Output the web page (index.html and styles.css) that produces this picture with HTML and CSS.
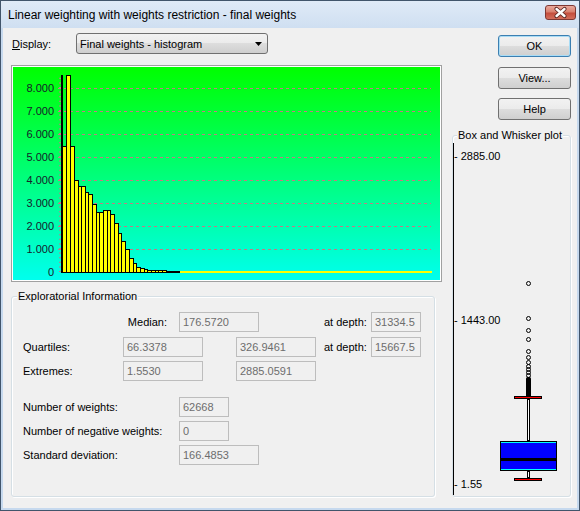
FILE: index.html
```html
<!DOCTYPE html>
<html>
<head>
<meta charset="utf-8">
<title>Linear weighting with weights restriction - final weights</title>
<link rel="stylesheet" href="styles.css">
</head>
<body>
<div class="window">
  <div class="titlebar">
    <span class="title">Linear weighting with weights restriction - final weights</span>
    <button class="close" aria-label="Close">
      <svg width="29" height="13" viewBox="0 0 29 13">
        <path d="M10.5 3 L18.5 10 M18.5 3 L10.5 10" stroke="#5a2622" stroke-width="4.2" stroke-linecap="round"/>
        <path d="M10.5 3 L18.5 10 M18.5 3 L10.5 10" stroke="#ffffff" stroke-width="2.4" stroke-linecap="round"/>
      </svg>
    </button>
  </div>
  <div class="client">
    <div class="left">
      <div class="display-row">
        <span class="display-label"><u>D</u>isplay:</span>
        <div class="combo">
          <span class="combo-text">Final weights - histogram</span>
          <svg class="combo-arrow" width="7" height="4" viewBox="0 0 7 4"><path d="M0 0 H7 L3.5 4 Z" fill="#000"/></svg>
        </div>
      </div>
      <div class="chart">
        <svg width="427" height="213" viewBox="13 67 427 213">
          <defs>
            <linearGradient id="bg" x1="0" y1="0" x2="0" y2="1">
              <stop offset="0" stop-color="#00ff00"/>
              <stop offset="1" stop-color="#00ffee"/>
            </linearGradient>
          </defs>
          <rect x="13" y="67" width="427" height="213" fill="url(#bg)"/>
          <g stroke="#c47a84" stroke-width="1" stroke-dasharray="3 3">
            <line x1="58" y1="88.5" x2="431" y2="88.5"/>
            <line x1="58" y1="111.5" x2="431" y2="111.5"/>
            <line x1="58" y1="134.5" x2="431" y2="134.5"/>
            <line x1="58" y1="157.5" x2="431" y2="157.5"/>
            <line x1="58" y1="180.5" x2="431" y2="180.5"/>
            <line x1="58" y1="203.5" x2="431" y2="203.5"/>
            <line x1="58" y1="226.5" x2="431" y2="226.5"/>
            <line x1="58" y1="249.5" x2="431" y2="249.5"/>
          </g>
          <g class="ylab" text-anchor="end">
            <text x="54" y="92">8.000</text>
            <text x="54" y="115">7.000</text>
            <text x="54" y="138">6.000</text>
            <text x="54" y="161">5.000</text>
            <text x="54" y="184">4.000</text>
            <text x="54" y="207">3.000</text>
            <text x="54" y="230">2.000</text>
            <text x="54" y="253">1.000</text>
            <text x="54" y="276">0</text>
          </g>
          <line x1="60" y1="272" x2="60" y2="75" stroke="#c47a84" stroke-width="2" stroke-dasharray="1 3.6"/>
          <rect x="61" y="75" width="2" height="198" fill="#000"/>
          <rect x="61" y="271" width="119" height="2" fill="#000"/>
          <rect x="180" y="271" width="252" height="2" fill="#ffff00"/>
          <g fill="#ffff00" stroke="#000" stroke-width="1">
            <rect x="62.5" y="146.5" width="4" height="126"/>
            <rect x="66.5" y="75.5" width="4" height="197"/>
            <rect x="70.5" y="146.5" width="4" height="126"/>
            <rect x="74.5" y="180.5" width="4" height="92"/>
            <rect x="78.5" y="186.5" width="3" height="86"/>
            <rect x="81.5" y="186.5" width="4" height="86"/>
            <rect x="85.5" y="192.5" width="3" height="80"/>
            <rect x="88.5" y="194.5" width="4" height="78"/>
            <rect x="92.5" y="204.5" width="4" height="68"/>
            <rect x="96.5" y="212.5" width="3" height="60"/>
            <rect x="99.5" y="212.5" width="4" height="60"/>
            <rect x="103.5" y="210.5" width="4" height="62"/>
            <rect x="107.5" y="210.5" width="3" height="62"/>
            <rect x="110.5" y="214.5" width="4" height="58"/>
            <rect x="114.5" y="223.5" width="4" height="49"/>
            <rect x="118.5" y="233.5" width="3" height="39"/>
            <rect x="121.5" y="241.5" width="4" height="31"/>
            <rect x="125.5" y="249.5" width="4" height="23"/>
            <rect x="129.5" y="258.5" width="4" height="14"/>
            <rect x="133.5" y="263.5" width="3" height="9"/>
            <rect x="136.5" y="267.5" width="4" height="5"/>
            <rect x="140.5" y="268.5" width="4" height="4"/>
            <rect x="144.5" y="269.5" width="3" height="3"/>
            <rect x="147.5" y="270.5" width="4" height="2"/>
            <rect x="151.5" y="270.5" width="4" height="2"/>
            <rect x="155.5" y="270.5" width="3" height="2"/>
            <rect x="158.5" y="270.5" width="4" height="2"/>
            <rect x="162.5" y="270.5" width="4" height="2"/>
          </g>
        </svg>
      </div>
      <div class="group info">
        <span class="legend">Exploratorial Information</span>
        <div class="info-grid">
          <span class="lab median-lab">Median:</span>
          <span class="field f-median">176.5720</span>
          <span class="lab depth-lab r1">at depth:</span>
          <span class="field f-depth r1">31334.5</span>

          <span class="lab first r3">Quartiles:</span>
          <span class="field fa r3">66.3378</span>
          <span class="field fb r3">326.9461</span>
          <span class="lab depth-lab r3">at depth:</span>
          <span class="field f-depth r3">15667.5</span>

          <span class="lab first r5">Extremes:</span>
          <span class="field fa r5">1.5530</span>
          <span class="field fb r5">2885.0591</span>

          <span class="lab wide r7">Number of weights:</span>
          <span class="field short r7">62668</span>

          <span class="lab wide r9">Number of negative weights:</span>
          <span class="field short r9">0</span>

          <span class="lab wide r11">Standard deviation:</span>
          <span class="field long r11">166.4853</span>
        </div>
      </div>
    </div>
    <div class="right">
      <button class="btn default b-ok">OK</button>
      <button class="btn b-view">View...</button>
      <button class="btn b-help">Help</button>
      <div class="group boxplot">
        <span class="legend">Box and Whisker plot</span>
        <svg width="117" height="360" viewBox="453 136 117 360">
          <rect x="453" y="143" width="1" height="352" fill="#000"/>
          <g class="blab">
            <text x="454" y="160">- 2885.00</text>
            <text x="454" y="324">- 1443.00</text>
            <text x="454" y="488">- 1.55</text>
          </g>
          <g fill="none" stroke="#000" stroke-width="1">
            <circle cx="528.5" cy="283.5" r="2"/>
            <circle cx="528.5" cy="318.5" r="2"/>
            <circle cx="528.5" cy="330.5" r="2"/>
            <circle cx="528.5" cy="339.5" r="2"/>
            <circle cx="528.5" cy="351.5" r="2"/>
            <circle cx="528.5" cy="357.5" r="2"/>
            <circle cx="528.5" cy="362.5" r="2"/>
            <circle cx="528.5" cy="366.5" r="2"/>
            <circle cx="528.5" cy="369.5" r="2"/>
            <circle cx="528.5" cy="372.5" r="2"/>
            <circle cx="528.5" cy="375.5" r="2"/>
          </g>
          <rect x="526" y="377" width="5" height="21" rx="1.5" fill="#000"/>
          <rect x="527.5" y="399" width="2" height="42" fill="#fff" stroke="#000"/>
          <rect x="514.5" y="396.5" width="27" height="2" fill="#ff0000" stroke="#000"/>
          <rect x="500.5" y="441.5" width="56" height="29" fill="#0000ff" stroke="#000"/>
          <rect x="501" y="442" width="55" height="1" fill="#00ffff"/>
          <rect x="501" y="469" width="55" height="1" fill="#00ffff"/>
          <rect x="501" y="458" width="55" height="3" fill="#000"/>
          <rect x="527.5" y="471" width="2" height="7" fill="#fff" stroke="#000"/>
          <rect x="514.5" y="478.5" width="27" height="2" fill="#ff0000" stroke="#000"/>
        </svg>
      </div>
    </div>
  </div>
</div>
</body>
</html>
```

FILE: styles.css
```css
* {
  box-sizing: border-box;
}

html,
body {
  margin: 0;
  padding: 0;
}

body {
  width: 580px;
  height: 511px;
  overflow: hidden;
  font-family: "Liberation Sans", Arial, sans-serif;
  font-size: 11px;
  color: #000;
  background: #c9daee;
}

.window {
  width: 580px;
  height: 511px;
  border: 1px solid #41556b;
  background: #c6d9ee;
  display: flex;
  flex-direction: column;
}

.titlebar {
  height: 27px;
  flex: none;
  display: flex;
  align-items: flex-start;
  padding: 0 3px 0 7px;
  background: linear-gradient(#dfeaf7, #cfdff1);
}

.title {
  font-size: 12px;
  line-height: 15px;
  margin-top: 7px;
  white-space: nowrap;
}

.close {
  margin-left: auto;
  margin-top: 4px;
  width: 31px;
  height: 15px;
  padding: 0;
  border: 1px solid #7e3833;
  border-radius: 3px;
  background: linear-gradient(#eaa99c, #d9816f 45%, #c44e3d 55%, #d46e5c);
  display: flex;
  align-items: center;
  justify-content: center;
}

.close svg {
  display: block;
}

.client {
  flex: 1;
  margin: 0 2px 2px;
  background: #f0f0f0;
  display: flex;
  gap: 10px;
  padding: 0 6px 0 8px;
}

.left {
  width: 431px;
  display: flex;
  flex-direction: column;
}

.display-row {
  margin-top: 5px;
  height: 21px;
  display: flex;
  align-items: center;
}

.display-label {
  width: 65px;
  padding-left: 1px;
}

.combo {
  width: 192px;
  height: 21px;
  border: 1px solid #707070;
  border-radius: 3px;
  background: linear-gradient(#f2f2f2, #ebebeb 50%, #dddddd 50%, #cfcfcf);
  display: flex;
  align-items: center;
  padding: 0 5px 0 3px;
}

.combo-text {
  flex: 1;
  white-space: nowrap;
}

.combo-arrow {
  display: block;
}

.chart {
  margin-top: 11px;
  width: 431px;
  height: 217px;
  border: 1px solid #a0a0a0;
  padding: 1px;
  background: #fff;
}

.chart svg {
  display: block;
}

.ylab text {
  font-family: "Liberation Sans", Arial, sans-serif;
  font-size: 11px;
  fill: #17202a;
}

.group {
  position: relative;
  border: 1px solid #d5dfe5;
  border-radius: 3px;
  box-shadow: 1px 1px 0 #ffffff, inset 1px 1px 0 #ffffff;
}

.legend {
  position: absolute;
  top: -7px;
  left: 5px;
  padding: 0 1px;
  line-height: 13px;
  background: #f0f0f0;
  white-space: nowrap;
}

.info {
  margin-top: 14px;
  width: 424px;
  height: 201px;
  padding: 15px 0 0 11px;
}

.info-grid {
  display: grid;
  grid-template-columns: 100px 56px 24px 33px 23px 57px 8px 47px 50px;
  grid-template-rows: 20px 5px 20px 4px 20px 16px 20px 4px 20px 4px 20px;
}

.lab {
  align-self: center;
  white-space: nowrap;
}

.field {
  height: 20px;
  border: 1px solid #bdbdbd;
  background: #f0f0f0;
  color: #6d6d6d;
  padding-left: 3px;
  line-height: 18px;
  white-space: nowrap;
  overflow: hidden;
}

.median-lab {
  grid-row: 1;
  grid-column: 1 / 3;
  justify-self: end;
  padding-right: 12px;
}

.f-median {
  grid-row: 1;
  grid-column: 3 / 6;
}

.depth-lab {
  grid-column: 8 / 9;
}

.f-depth {
  grid-column: 9 / 10;
}

.first {
  grid-column: 1 / 2;
}

.fa {
  grid-column: 2 / 4;
}

.fb {
  grid-column: 5 / 7;
}

.wide {
  grid-column: 1 / 3;
}

.short {
  grid-column: 3 / 5;
  width: 50px;
  justify-self: start;
}

.long {
  grid-column: 3 / 6;
}

.r1 { grid-row: 1; }
.r3 { grid-row: 3; }
.r5 { grid-row: 5; }
.r7 { grid-row: 7; }
.r9 { grid-row: 9; }
.r11 { grid-row: 11; }

.right {
  width: 119px;
  display: flex;
  flex-direction: column;
  align-items: flex-end;
}

.btn {
  width: 73px;
  height: 22px;
  padding: 0;
  font: inherit;
  color: #000;
  border: 1px solid #707070;
  border-radius: 3px;
  background: linear-gradient(#f2f2f2, #ebebeb 50%, #dddddd 50%, #cfcfcf);
}

.btn.default {
  border-color: #3c7fb1;
  box-shadow: inset 0 0 0 1px #a9dcf5;
}

.b-ok {
  margin-top: 7px;
}

.b-view {
  margin-top: 10px;
}

.b-help {
  margin-top: 9px;
}

.boxplot {
  margin-top: 15px;
  width: 119px;
  height: 362px;
}

.boxplot .legend {
  left: 4px;
}

.boxplot svg {
  display: block;
}

.blab text {
  font-family: "Liberation Sans", Arial, sans-serif;
  font-size: 11px;
  fill: #000;
}
```
